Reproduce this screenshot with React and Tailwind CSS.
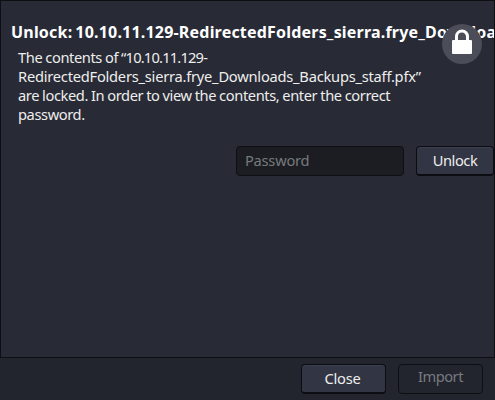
function LockBadge() {
  return (
    <div className="absolute left-[441px] top-[23px] flex h-10 w-10 items-center justify-center rounded-full bg-[#4b4d59]">
      <svg width="40" height="40" viewBox="0 0 40 40" fill="none">
        <path d="M14.5 17V12.5a5.5 5.5 0 0 1 11 0V17" stroke="#fff" strokeWidth="3" />
        <rect x="10" y="16" width="20" height="14" rx="1" fill="#fff" />
      </svg>
    </div>
  );
}

export default function App() {
  return (
    <div className="flex h-[400px] w-[495px] flex-col overflow-hidden bg-[#23252e] font-['Noto_Sans',sans-serif] text-[14.67px] text-[#eeeeec]">
      <main className="relative flex h-[358px] shrink-0 flex-col overflow-hidden border border-[#0e0f13] bg-[#282a36]">
        <h1 className="mt-[20px] ml-[10px] h-[22px] whitespace-nowrap text-[16px] leading-[22px] font-bold tracking-[0.2px] text-white [word-spacing:-1.4px]">
          Unlock: 10.10.11.129-RedirectedFolders_sierra.frye_Downloads_Backups_staff.pfx
        </h1>
        <p className="mt-[5px] ml-[17px] h-[76px] whitespace-nowrap leading-[19px] tracking-[-0.4px] [word-spacing:-0.4px]">
          The contents of <span className="tracking-[-0.8px]">“10.10.11.129-</span>
          <br />
          <span className="tracking-[-0.23px]">RedirectedFolders_sierra.frye_Downloads_Backups_staff.pfx”</span>
          <br />
          are locked. In order to view the contents, enter the correct
          <br />
          password.
        </p>
        <form className="mt-[22px] ml-[235px] flex h-[30px] gap-[12px]">
          <input
            type="text"
            placeholder="Password"
            className="h-[30px] w-[168px] shrink-0 rounded-[4px] border border-[#0e0f13] bg-[#1b1d23] px-2 pb-[2px] leading-5 tracking-[-0.25px] placeholder:text-[#777a7c]"
          />
          <button type="button" className="h-[30px] w-[78px] shrink-0 rounded-[4px] border border-b-2 border-[#0c0d12] bg-[#323544] pb-[2px] tracking-[-0.45px] shadow-[inset_0_1px_#3c3f4e]">
            Unlock
          </button>
        </form>
        <LockBadge />
      </main>
      <footer className="flex pt-[6px] pl-[301px]">
        <button type="button" className="h-[30px] w-[85px] shrink-0 rounded-[4px] border border-b-2 border-[#0c0d12] bg-[#323544] pr-[2px] pb-[2px] tracking-[-0.2px] shadow-[inset_0_1px_#3c3f4e]">
          Close
        </button>
        <button type="button" disabled className="ml-[12px] h-[30px] w-[85px] shrink-0 rounded-[4px] border border-[#0e0f13] bg-[#23252e] pb-[6px] tracking-[-0.5px] text-[#777a80]">
          Import
        </button>
      </footer>
    </div>
  );
}
